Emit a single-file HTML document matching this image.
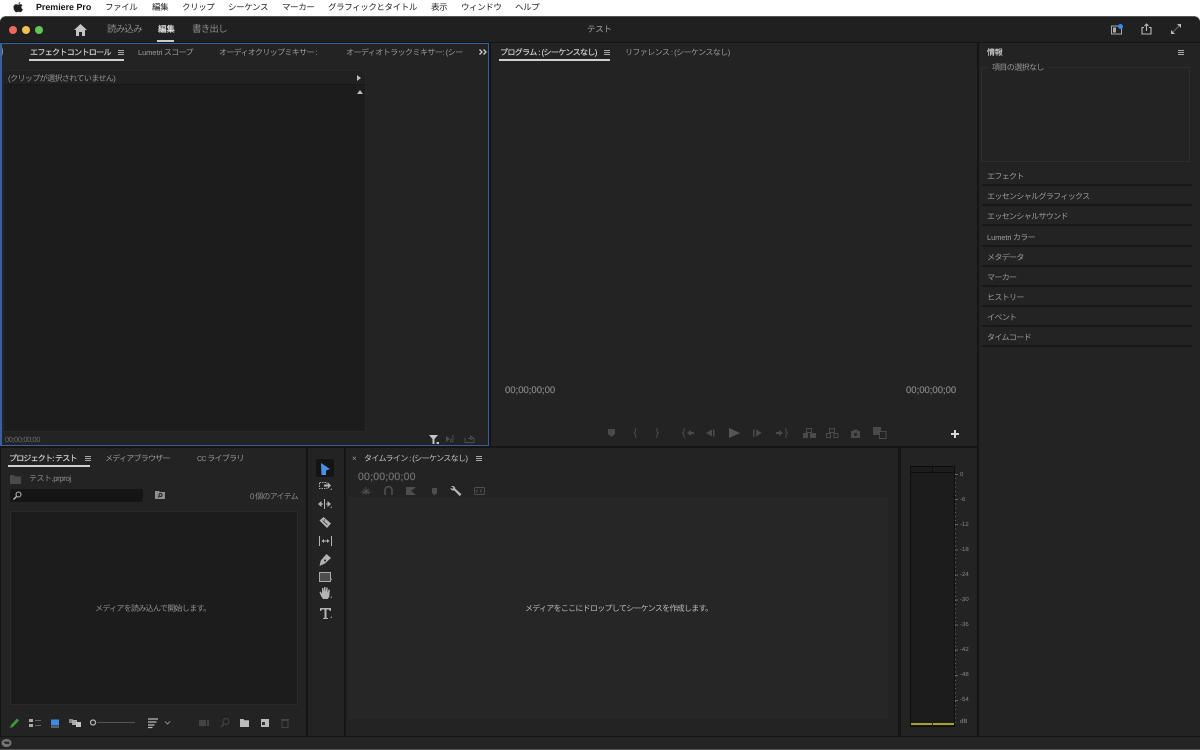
<!DOCTYPE html>
<html lang="ja"><head><meta charset="utf-8"><title>Premiere Pro</title>
<style>
html,body{margin:0;padding:0;width:1200px;height:750px;overflow:hidden;background:#fff}
body{position:relative;font-family:"Liberation Sans","Noto Sans CJK JP",sans-serif;text-rendering:geometricPrecision}
.a{position:absolute}
.t{position:absolute;white-space:nowrap;font-size:8px;line-height:12px;color:#9a9a9a;letter-spacing:-.65px}
.m{position:absolute;white-space:nowrap;font-size:8.5px;line-height:14px;top:0;color:#222;letter-spacing:-.4px}
.w{color:#d8d8d8;-webkit-text-stroke:.15px #d8d8d8}
.p{position:absolute;background:#232323}
.u{position:absolute;height:1.5px;background:#d0d0d0}
.row{position:absolute;left:982px;width:210px;height:19px;border-bottom:2px solid #181818}
.r{color:#9c9c9c;left:987px}
.d{left:960px;font-size:6px;color:#888;letter-spacing:0}
.tc{font-size:9.5px;letter-spacing:0;color:#858585;-webkit-text-stroke:.2px #858585}
.l{font-size:7.5px;letter-spacing:-.1px}
svg{position:absolute;overflow:visible}
</style></head><body>
<!-- menu bar -->
<svg style="left:13px;top:2px" width="10" height="11" viewBox="0 0 10 11"><path d="M7.3 0c.1.9-.7 2-1.800 2.100C5.400 1.100 6.300.1 7.300 0zM5.200 2.700c.5 0 1.200-.6 2.200-.6.800 0 1.600.4 2.100 1.100-1.700 1-1.400 3.400.4 4.100-.5 1.300-1.500 3-2.600 3-.7 0-1-.5-1.900-.5s-1.200.5-1.900.5C2.200 10.300.5 7.600.5 5.500c0-2.100 1.300-3.300 2.600-3.300.9 0 1.600.5 2.100.5z" fill="#222"/></svg>
<span class="m" style="left:36px;font-weight:700;font-size:8.9px;letter-spacing:0;color:#111">Premiere Pro</span>
<span class="m" style="left:105px">ファイル</span>
<span class="m" style="left:152px">編集</span>
<span class="m" style="left:182px">クリップ</span>
<span class="m" style="left:228px">シーケンス</span>
<span class="m" style="left:282px">マーカー</span>
<span class="m" style="left:328px">グラフィックとタイトル</span>
<span class="m" style="left:431px">表示</span>
<span class="m" style="left:461px">ウィンドウ</span>
<span class="m" style="left:515px">ヘルプ</span>

<!-- window -->
<div class="a" style="left:0;top:16px;width:1200px;height:734px;background:#151515;border-radius:6px 6px 0 0;border-top:1px solid #555;box-sizing:border-box"></div>
<div class="a" style="left:0;top:17px;width:1200px;height:25px;background:#202020;border-radius:6px 6px 0 0"></div>
<div class="a" style="left:9px;top:26px;width:8px;height:8px;border-radius:50%;background:#ed6a5e"></div>
<div class="a" style="left:22px;top:26px;width:8px;height:8px;border-radius:50%;background:#f4bf4f"></div>
<div class="a" style="left:35px;top:26px;width:8px;height:8px;border-radius:50%;background:#61c554"></div>
<svg style="left:74px;top:24px" width="13" height="12" viewBox="0 0 13 12"><path d="M6.500 0L13 6h-2v6H8V8H5v4H2V6H0z" fill="#c4c4c4"/></svg>
<span class="t" style="left:107px;top:23px;font-size:9.5px;line-height:13px;letter-spacing:-.8px;color:#8a8a8a">読み込み</span>
<span class="t" style="left:158px;top:23px;font-size:8.5px;line-height:13px;letter-spacing:-.1px;color:#e2e2e2;font-weight:700">編集</span>
<div class="u" style="left:157px;top:40px;width:17px;background:#ccc"></div>
<span class="t" style="left:192px;top:23px;font-size:9.5px;line-height:13px;letter-spacing:-.8px;color:#8a8a8a">書き出し</span>
<span class="t" style="left:587px;top:23px;font-size:8.5px;line-height:13px;letter-spacing:-.3px;color:#a0a0a0">テスト</span>
<svg style="left:1111px;top:24px" width="12" height="11" viewBox="0 0 12 11"><rect x=".5" y="2" width="10" height="8" fill="none" stroke="#aaa"/><rect x="2" y="3.500" width="3" height="5" fill="#aaa"/><circle cx="9.500" cy="2.500" r="2.500" fill="#3b88ee"/></svg>
<svg style="left:1141px;top:23px" width="11" height="12" viewBox="0 0 11 12"><path d="M3 4.500H1v6.500h9V4.500H8M5.500 8V1M3.500 3l2-2 2 2" fill="none" stroke="#bbb" stroke-width="1.100"/></svg>
<svg style="left:1170px;top:23px" width="12" height="12" viewBox="0 0 12 12"><path d="M7 1h4v4zM1 11V7l4 4z" fill="#bbb"/><path d="M9 3L3 9" stroke="#666"/></svg>

<!-- effect controls -->
<div class="p" style="left:0;top:43px;width:489px;height:403px;box-sizing:border-box;border:1px solid #36609f;border-left-width:2px"></div>
<span class="t w" style="left:30px;top:47px">エフェクトコントロール</span>
<div class="u" style="left:29px;top:59px;width:95px"></div>
<svg style="left:118px;top:50px" width="6" height="6"><path d="M0 .5h6M0 2.500h6M0 4.500h6" stroke="#aaa"/></svg>
<span class="t" style="left:138px;top:47px"><span class="l">Lumetri</span> スコープ</span>
<span class="t" style="left:219px;top:47px">オーディオクリップミキサー :</span>
<span class="t" style="left:346px;top:47px;letter-spacing:-.55px">オーディオトラックミキサー: (シー</span>
<div class="a" style="left:0;top:47px;width:2px;height:9px;border-right:1px solid #8a8a8a;border-radius:0 4px 4px 0"></div>
<svg style="left:479px;top:49px" width="8" height="6" viewBox="0 0 8 6"><path d="M.5.500L3 3 .5 5.500M4.500.500L7 3 4.500 5.500" fill="none" stroke="#d0d0d0" stroke-width="1.300"/></svg>
<div class="a" style="left:3px;top:70px;width:363px;height:362px;background:#1c1c1c;border:1px solid #272727;box-sizing:border-box"></div>
<div class="a" style="left:4px;top:71px;width:361px;height:14px;background:#212121;border-bottom:1px solid #171717;box-sizing:border-box"></div>
<span class="t" style="left:8px;top:72.500px;color:#929292;letter-spacing:-.6px">(クリップが選択されていません)</span>
<svg style="left:357px;top:75px" width="4" height="6"><path d="M0 0l4 3-4 3z" fill="#bbb"/></svg>
<svg style="left:357px;top:90px" width="6" height="4"><path d="M0 4l3-4 3 4z" fill="#bbb"/></svg>
<span class="t" style="left:5px;top:434px;font-size:7.5px;letter-spacing:-.42px;color:#6c6c6c">00;00;00;00</span>
<svg style="left:429px;top:435px" width="11" height="9" viewBox="0 0 11 9"><path d="M0 0h9L5.500 4v5h-2V4z" fill="#c4c4c4"/><rect x="7.500" y="7" width="2.500" height="2" fill="#c4c4c4"/></svg>
<svg style="left:446px;top:435px" width="10" height="8" viewBox="0 0 10 8"><path d="M0 1l4 3-4 3z" fill="#4d4d4d"/><path d="M7 0v5.500a1.300 1.300 0 1 1-1-1" fill="none" stroke="#4d4d4d"/></svg>
<svg style="left:464px;top:435px" width="11" height="8" viewBox="0 0 11 8"><path d="M1 2.500v5h9v-5M4 3.500h2.500V1L9 3 6.500 5" fill="none" stroke="#4d4d4d"/></svg>

<!-- program -->
<div class="p" style="left:491px;top:43px;width:486px;height:403px"></div>
<span class="t w" style="left:500px;top:47px;letter-spacing:-.62px">プログラム : (シーケンスなし)</span>
<div class="u" style="left:499px;top:59px;width:111px"></div>
<svg style="left:604px;top:50px" width="6" height="6"><path d="M0 .5h6M0 2.500h6M0 4.500h6" stroke="#aaa"/></svg>
<span class="t" style="left:625px;top:47px;letter-spacing:-.6px">リファレンス : (シーケンスなし)</span>
<span class="t tc" style="left:505px;top:385px">00;00;00;00</span>
<span class="t tc" style="left:906px;top:385px">00;00;00;00</span>
<svg style="left:600px;top:426px" width="300" height="14" viewBox="0 0 300 14" fill="#4a4a4a">
<path d="M8 3h7v5l-3.500 3L8 8z"/>
<path d="M36.500 2.500c-1.200 0-1 .8-1 2s-.5 2-1.300 2.500c.8.500 1.300 1.300 1.300 2.500s-.2 2 1 2M56 2.500c1.200 0 1 .8 1 2s.5 2 1.300 2.500c-.8.500-1.300 1.300-1.300 2.500s.2 2-1 2" fill="none" stroke="#4a4a4a"/>
<path d="M85 2.500c-1.200 0-1 .8-1 2s-.5 2-1.300 2.500c.8.500 1.300 1.300 1.300 2.500s-.2 2 1 2" fill="none" stroke="#4a4a4a"/><path d="M87 7l4-3v2h3v2h-3v2z"/>
<path d="M106 7l6-3.500v7z"/><rect x="113" y="3.500" width="1.500" height="7"/>
<path d="M129 2l11 5-11 5z" fill="#555"/>
<rect x="153" y="3.500" width="1.500" height="7"/><path d="M156 3.500l6 3.500-6 3.500z"/>
<path d="M176 6h3V4l4 3-4 3V8h-3z"/><path d="M185 2.500c1.200 0 1 .8 1 2s.5 2 1.300 2.500c-.8.500-1.300 1.300-1.300 2.500s.2 2-1 2" fill="none" stroke="#4a4a4a"/>
<path d="M203 7h5v5h-5zM210 7h6v5h-6z"/><path d="M206.500 2.500h5v4h-5z" fill="none" stroke="#4a4a4a"/>
<path d="M226.500 7.500h4v4h-4zM234 7.500h4v4h-4z" fill="none" stroke="#4a4a4a"/><path d="M229.500 2.500h5v4h-5z" fill="none" stroke="#4a4a4a"/>
<path d="M251 5h2l1-1.500h3L258 5h2v7h-9z"/><circle cx="255.500" cy="8.500" r="1.500" fill="#232323"/>
<rect x="273" y="1" width="8" height="8"/><rect x="279.500" y="5.500" width="6.500" height="7" fill="#232323" stroke="#4a4a4a"/>
</svg>
<svg style="left:951px;top:430px" width="8" height="8"><path d="M4 0v8M0 4h8" stroke="#d8d8d8" stroke-width="2"/></svg>

<!-- project -->
<div class="p" style="left:1px;top:448px;width:305px;height:288px"></div>
<span class="t w" style="left:9px;top:453px;letter-spacing:-.8px">プロジェクト: テスト</span>
<div class="u" style="left:8px;top:465px;width:82px"></div>
<svg style="left:85px;top:456px" width="6" height="6"><path d="M0 .5h6M0 2.500h6M0 4.500h6" stroke="#aaa"/></svg>
<span class="t" style="left:105px;top:453px;letter-spacing:-.75px">メディアブラウザー</span>
<span class="t" style="left:197px;top:453px;letter-spacing:-.7px"><span style="font-size:7px">CC</span> ライブラリ</span>
<svg style="left:10px;top:475px" width="11" height="9"><path d="M0 0h4l1 1.500h6V9H0z" fill="#4a4a4a"/></svg>
<span class="t" style="left:29px;top:473px;color:#8a8a8a;letter-spacing:-.5px">テスト.prproj</span>
<div class="a" style="left:10px;top:489px;width:133px;height:13px;background:#151515;border-radius:2px"></div>
<svg style="left:13px;top:491px" width="9" height="9" viewBox="0 0 9 9"><circle cx="5.500" cy="3.500" r="2.500" fill="none" stroke="#bbb"/><path d="M3.500 5.500L.5 8.500" stroke="#bbb" stroke-width="1.300"/></svg>
<svg style="left:155px;top:491px" width="10" height="8" viewBox="0 0 10 8"><path d="M0 0h4l1 1h5v7H0z" fill="#8f8f8f"/><circle cx="5.500" cy="4" r="1.500" fill="none" stroke="#222"/><path d="M4.300 5.200L3 6.500" stroke="#222"/></svg>
<span class="t" style="left:250px;top:491px;letter-spacing:-.75px;color:#8a8a8a">0 個のアイテム</span>
<div class="a" style="left:10px;top:511px;width:288px;height:194px;background:#1c1c1c;border:1px solid #2a2a2a;box-sizing:border-box"></div>
<span class="t" style="left:95px;top:603px;letter-spacing:-.68px;color:#8f8f8f">メディアを読み込んで開始します。</span>
<svg style="left:9px;top:717px" width="280" height="12" viewBox="0 0 280 12">
<path d="M1 11l1-3L8 1.500l2 2L4 10z" fill="#3a9a3a"/>
<path d="M20 2h4v3h-4zM20 7h4v3h-4z" fill="#aaa"/><path d="M26 3.500h6M26 8.500h6" stroke="#666"/>
<rect x="42" y="2.500" width="8" height="6" fill="#3f8ae0"/><rect x="42" y="9.500" width="8" height="1" fill="#999"/>
<path d="M60 2h4v4h-4z" fill="#888"/><path d="M63 3h5v5h-5z" fill="#aaa"/><path d="M67 5h5v5h-5z" fill="#c4c4c4"/>
<circle cx="84" cy="5.500" r="2.500" fill="none" stroke="#bbb" stroke-width="1.200"/><path d="M88 5.500h38" stroke="#555"/>
<path d="M139 2h10M139 5h8.500M139 8h6.500M139 10.500h4.500" stroke="#bbb" stroke-width="1.200"/>
<path d="M156 4.500l2.500 2.500 2.500-2.500" fill="none" stroke="#888"/>
<path d="M190 3h7v6h-7z" fill="#444"/><path d="M198 3h2v6h-2z" fill="#444"/>
<circle cx="217" cy="4.500" r="3" fill="none" stroke="#444"/><path d="M215 7l-3 3" stroke="#444" stroke-width="1.300"/>
<path d="M231 2h3.500l1 1.300h4.500V10h-9z" fill="#bbb"/>
<path d="M252 2h8v8h-8z" fill="#bbb"/><path d="M253 5h3v3h-3z" fill="#333"/>
<path d="M273 3.500h6v7h-6zM272 2.500h8" fill="none" stroke="#444"/>
</svg>

<!-- tools -->
<div class="p" style="left:308px;top:448px;width:36px;height:288px"></div>
<div class="a" style="left:316px;top:459px;width:18px;height:18px;background:#141414;border-radius:2px"></div>
<svg style="left:317px;top:460px" width="18" height="160" viewBox="0 0 18 160" fill="#b4b4b4">
<path d="M4 3l9 6-4 1.500V15L4.500 15z" fill="#4a90e8"/>
<path d="M2.500 22.500h7.500v6H2.500z" fill="none" stroke="#aaa" stroke-dasharray="1.500 1"/><path d="M7 24.500h4v-2l3 3-3 3v-2H7z"/>
<path d="M1 44l3.500-3v6zM14 44l-3.500-3v6zM7 39h1v10H7z"/><path d="M4 43.500h2v1H4zM9 43.500h2v1H9z"/>
<path d="M2.500 60.500L6.500 57l7.500 6.500-4 4.500z"/><path d="M5.500 60.500l5 4.500M7 59.500l1 1" stroke="#232323" fill="none" stroke-width=".7"/>
<path d="M2.500 76v10M14.500 76v10" stroke="#b4b4b4" fill="none"/><path d="M5 81h7" stroke="#b4b4b4"/><path d="M4.500 81l2.500-2v4zM12.500 81l-2.500-2v4z"/>
<path d="M2.500 106l1.300-5.500 5.700-6.500 4.500 4-6 5.500z"/><circle cx="8" cy="100.500" r="1" fill="#232323"/>
<rect x="2.500" y="112.500" width="11" height="9" fill="#4d4d4d" stroke="#aaa"/>
<path d="M4 136l-1.500-4 1-.5 1.500 2 0-5.500h1.300l.3 4 .5-5h1.300l.2 5 .7-4.500h1.300l0 5 1-3h1.200l-.5 7-1.500 2.500H6z"/>
<path d="M3 148h11v3h-1l-1-1.500H9.500V158h1.500v1H6v-1h1.500v-8.500H5L4 151H3z"/>
</svg>
<svg style="left:330px;top:488px" width="4" height="136" fill="#888"><path d="M2 0v2H0zM2 18v2H0zM2 90v2H0zM2 108v2H0zM2 128v2H0z"/></svg>

<!-- timeline -->
<div class="p" style="left:346px;top:448px;width:552px;height:288px"></div>
<div class="a" style="left:348px;top:497px;width:540px;height:222px;background:#262626"></div>
<span class="t" style="left:352px;top:453px;color:#999;font-size:8px">×</span>
<span class="t w" style="left:364px;top:453px;letter-spacing:-.65px;color:#c4c4c4;-webkit-text-stroke:0">タイムライン : (シーケンスなし)</span>
<svg style="left:476px;top:456px" width="6" height="6"><path d="M0 .5h6M0 2.500h6M0 4.500h6" stroke="#aaa"/></svg>
<span class="t" style="left:358px;top:471px;font-size:10.5px;line-height:13px;letter-spacing:.2px;color:#6e6e6e;-webkit-text-stroke:.25px #6e6e6e">00;00;00;00</span>
<svg style="left:360px;top:485px" width="130" height="12" viewBox="0 0 130 12" fill="#4e4e4e">
<path d="M1 7h10M6 2v8M3 4l6 5M9 4l-6 5" stroke="#4e4e4e" fill="none"/>
<path d="M25 10V5a3.500 3.500 0 0 1 7 0v5" fill="none" stroke="#4e4e4e" stroke-width="1.600"/>
<path d="M46 2h10v8H46zM56 2l-5 4 5 4z"/>
<path d="M72 3h5v5l-2.500 2.500L72 8z"/>
<path d="M91 1.500c1.700-1 3.500-.5 4 1 .2.600.1 1 .4 1.300l6 5.500-1.700 1.800-5.500-5.700c-1.800.5-3.700-.6-3.700-2.500l2 1 1.300-1.200z" fill="#b8b8b8"/>
<rect x="114.500" y="2.500" width="10" height="7" rx="1" fill="none" stroke="#4e4e4e"/><path d="M118 5h-1.500v2h1.500M122 5h-1.500v2h1.500" stroke="#4e4e4e" fill="none" stroke-width=".8"/>
</svg>
<span class="t" style="left:525px;top:603px;letter-spacing:-.72px;color:#bcbcbc">メディアをここにドロップしてシーケンスを作成します。</span>

<!-- audio meter -->
<div class="p" style="left:901px;top:448px;width:76px;height:288px"></div>
<div class="a" style="left:910px;top:466px;width:45px;height:261px;background:#1c1c1c;border:1px solid #0e0e0e;box-sizing:border-box"></div>
<div class="a" style="left:910px;top:472px;width:45px;height:1px;background:#0e0e0e"></div>
<div class="a" style="left:932px;top:466px;width:1px;height:6px;background:#0e0e0e"></div>
<div class="a" style="left:911px;top:723px;width:43px;height:2px;background:#a5a030"></div>
<div class="a" style="left:932px;top:723px;width:1px;height:2px;background:#333"></div>
<div class="a" style="left:955px;top:474px;width:1px;height:250px;background:repeating-linear-gradient(#666 0 1px,transparent 1px 4.2px)"></div>
<div class="a" style="left:955px;top:474px;width:3px;height:250px;background:repeating-linear-gradient(#666 0 1px,transparent 1px 25.1px)"></div>
<div class="t d" style="top:469px">0</div>
<div class="t d" style="top:494px">-6</div>
<div class="t d" style="top:519px">-12</div>
<div class="t d" style="top:544px">-18</div>
<div class="t d" style="top:569px">-24</div>
<div class="t d" style="top:594px">-30</div>
<div class="t d" style="top:619px">-36</div>
<div class="t d" style="top:644px">-42</div>
<div class="t d" style="top:669px">-48</div>
<div class="t d" style="top:694px">-54</div>
<div class="t d" style="top:716px">dB</div>

<!-- right column -->
<div class="p" style="left:979px;top:43px;width:221px;height:693px"></div>
<span class="t w" style="left:987px;top:47px;color:#c8c8c8;letter-spacing:-.2px">情報</span>
<svg style="left:1178px;top:50px" width="6" height="6"><path d="M0 .5h6M0 2.500h6M0 4.500h6" stroke="#aaa"/></svg>
<div class="a" style="left:981px;top:67px;width:209px;height:95px;border:1px solid #2d2d2d;box-sizing:border-box"></div>
<span class="t" style="left:988px;top:62px;padding:0 4px;background:#232323;color:#969696;letter-spacing:-.6px">項目の選択なし</span>
<div class="row" style="top:165px"></div><span class="t r" style="top:171px">エフェクト</span>
<div class="row" style="top:185px"></div><span class="t r" style="top:191px">エッセンシャルグラフィックス</span>
<div class="row" style="top:205px"></div><span class="t r" style="top:211px">エッセンシャルサウンド</span>
<div class="row" style="top:226px"></div><span class="t r" style="top:232px"><span class="l">Lumetri</span> カラー</span>
<div class="row" style="top:246px"></div><span class="t r" style="top:252px">メタデータ</span>
<div class="row" style="top:266px"></div><span class="t r" style="top:272px">マーカー</span>
<div class="row" style="top:286px"></div><span class="t r" style="top:292px">ヒストリー</span>
<div class="row" style="top:306px"></div><span class="t r" style="top:312px">イベント</span>
<div class="row" style="top:326px"></div><span class="t r" style="top:332px">タイムコード</span>

<!-- status bar -->
<div class="a" style="left:0;top:737px;width:1200px;height:13px;background:#242424"></div>
<div class="a" style="left:0;top:749px;width:1200px;height:1px;background:#555"></div>
<svg style="left:1px;top:738px" width="11" height="10" viewBox="0 0 11 10"><ellipse cx="5.500" cy="5" rx="5" ry="4" fill="#777"/><path d="M3 5c1-2 2 2 3 0s2-1 2 0-2 1-2 0-2-2-3 0z" fill="none" stroke="#222"/></svg>
</body></html>
